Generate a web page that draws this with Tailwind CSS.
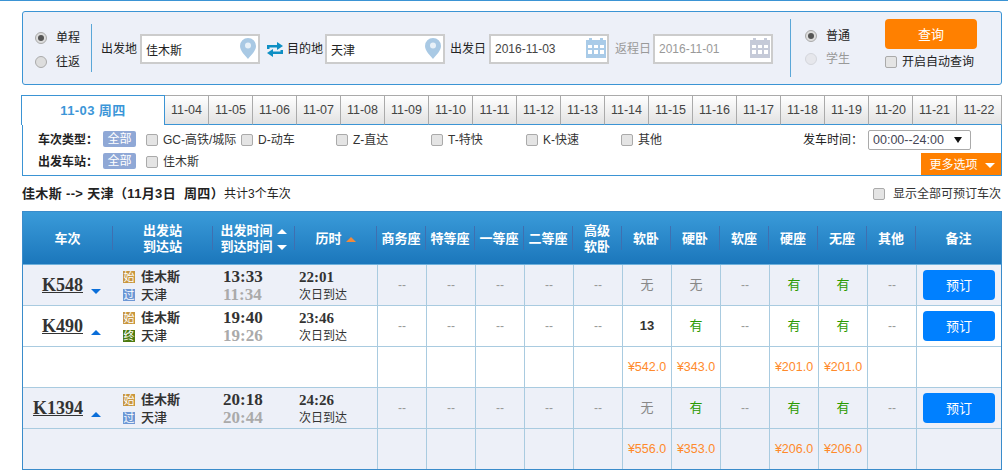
<!DOCTYPE html>
<html lang="zh-CN">
<head>
<meta charset="UTF-8"/>
<title>车票查询</title>
<script src="https://cdn.jsdelivr.net/npm/@tailwindcss/browser@4"></script>
</head>
<body class="bg-white border-t border-[#3b94d4] text-[12px] text-[#333] font-['Liberation_Sans','Noto_Sans_CJK_SC',sans-serif] overflow-hidden">
<div class="ml-[22px] w-[980px]">

  <!-- search box -->
  <div class="mt-[10px] h-[74px] flex items-center pl-[12px] pt-[2px] bg-[#edf0f8] border border-[#3b94d4] rounded-[3px]">
    <div class="w-[56px] pt-[2px]">
      <div class="h-[24px] flex items-center"><span class="w-[12px] h-[12px] rounded-full border border-[#aaa] bg-[#ddd] flex items-center justify-center"><span class="w-[6px] h-[6px] rounded-full bg-[#555]"></span></span><span class="ml-[9px] text-[#222]">单程</span></div>
      <div class="h-[24px] flex items-center"><span class="w-[12px] h-[12px] rounded-full border border-[#aaa] bg-[#ddd]"></span><span class="ml-[9px] text-[#222]">往返</span></div>
    </div>
    <div class="w-px h-[48px] mb-[2px] bg-[#5aa7d8]"></div>
    <span class="ml-[9px] w-[36px] text-[#222] whitespace-nowrap">出发地</span>
    <div class="relative ml-[3px] w-[120px] h-[30px]">
      <input value="佳木斯" class="w-full h-full pl-[4px] bg-white border-2 border-[#ccc] text-[#222] outline-none"/>
      <svg class="absolute right-[4px] top-[4px]" width="16" height="21" viewBox="0 0 16 21"><path d="M8 0a8 8 0 0 1 8 8c0 5-5 9-8 13C5 17 0 13 0 8a8 8 0 0 1 8-8z" fill="#a9c9e4"/><circle cx="8" cy="7.5" r="3" fill="#e8f1f8"/></svg>
    </div>
    <svg class="ml-[7px]" width="16" height="15" viewBox="0 0 16 15"><path d="M0 7V3h10V0l6 4-6 4V5.500H2.500V7z" fill="#0e8fc4"/><path d="M16 8v4H6v3l-6-4 6-4v2.500h7.500V8z" fill="#0e8fc4"/></svg>
    <span class="ml-[4px] w-[36px] text-[#222] whitespace-nowrap">目的地</span>
    <div class="relative ml-[2px] w-[120px] h-[30px]">
      <input value="天津" class="w-full h-full pl-[4px] bg-white border-2 border-[#ccc] text-[#222] outline-none"/>
      <svg class="absolute right-[4px] top-[4px]" width="16" height="21" viewBox="0 0 16 21"><path d="M8 0a8 8 0 0 1 8 8c0 5-5 9-8 13C5 17 0 13 0 8a8 8 0 0 1 8-8z" fill="#a9c9e4"/><circle cx="8" cy="7.500" r="3" fill="#e8f1f8"/></svg>
    </div>
    <span class="ml-[5px] w-[36px] text-[#222] whitespace-nowrap">出发日</span>
    <div class="relative ml-[3px] w-[120px] h-[30px]">
      <input value="2016-11-03" class="w-full h-full pl-[4px] bg-white border-2 border-[#ccc] text-[#444] outline-none"/>
      <svg class="absolute right-[3px] top-[4px]" width="20" height="20" viewBox="0 0 20 20"><path d="M0 2h3V0h3v2h8V0h3v2h3v18H0z" fill="#a9cbe8"/><path d="M2 7h4v3H2zM8 7h4v3H8zM14 7h4v3h-4zM2 12h4v4H2zM8 12h4v4H8zM14 12h4v4h-4z" fill="#fff"/></svg>
    </div>
    <span class="ml-[6px] w-[35px] text-[#999] whitespace-nowrap">返程日</span>
    <div class="relative ml-[3px] w-[120px] h-[30px]">
      <input value="2016-11-01" class="w-full h-full pl-[4px] bg-white border-2 border-[#ccc] text-[#999] outline-none"/>
      <svg class="absolute right-[3px] top-[4px]" width="20" height="20" viewBox="0 0 20 20"><path d="M0 2h3V0h3v2h8V0h3v2h3v18H0z" fill="#c5cad8"/><path d="M2 7h4v3H2zM8 7h4v3H8zM14 7h4v3h-4zM2 12h4v4H2zM8 12h4v4H8zM14 12h4v4h-4z" fill="#fff"/></svg>
    </div>
    <div class="ml-[17px] w-px h-[58px] mb-[2px] bg-[#5aa7d8]"></div>
    <div class="ml-[14px] w-[80px] self-start mt-[10px]">
      <div class="h-[23px] flex items-center"><span class="w-[12px] h-[12px] rounded-full border border-[#aaa] bg-[#ddd] flex items-center justify-center"><span class="w-[6px] h-[6px] rounded-full bg-[#555]"></span></span><span class="ml-[9px] text-[#222]">普通</span></div>
      <div class="h-[23px] flex items-center"><span class="w-[12px] h-[12px] rounded-full border border-[#d4d6dc] bg-[#e6e7ec]"></span><span class="ml-[9px] text-[#999]">学生</span></div>
    </div>
    <div class="self-start mt-[5px] w-[92px]">
      <button class="w-[92px] h-[30px] pt-[1px] rounded-[4px] bg-[#ff8000] text-white text-[13px]">查询</button>
      <div class="mt-[4px] flex items-center whitespace-nowrap"><span class="w-[12px] h-[12px] rounded-[2px] border border-[#aaa] bg-[#e4e4e4]"></span><span class="ml-[5px] text-[#222]">开启自动查询</span></div>
    </div>
  </div>

  <!-- date tabs -->
  <div class="mt-[10px] -ml-px flex h-[30px] text-[12.500px] text-[#444]">
    <div class="w-[144px] border-t border-x border-[#3b94d4] bg-white flex items-center justify-center font-bold text-[13px] tracking-[0.4px] text-[#3b96d8]">11-03 周四</div>
    <div class="w-[44px] flex items-center justify-center border-t border-r border-t-[#aaa] border-r-[#aaa] border-b border-b-[#3b94d4] bg-gradient-to-b from-white to-[#e2e2e2]">11-04</div>
    <div class="w-[44px] flex items-center justify-center border-t border-r border-t-[#aaa] border-r-[#aaa] border-b border-b-[#3b94d4] bg-gradient-to-b from-white to-[#e2e2e2]">11-05</div>
    <div class="w-[44px] flex items-center justify-center border-t border-r border-t-[#aaa] border-r-[#aaa] border-b border-b-[#3b94d4] bg-gradient-to-b from-white to-[#e2e2e2]">11-06</div>
    <div class="w-[44px] flex items-center justify-center border-t border-r border-t-[#aaa] border-r-[#aaa] border-b border-b-[#3b94d4] bg-gradient-to-b from-white to-[#e2e2e2]">11-07</div>
    <div class="w-[44px] flex items-center justify-center border-t border-r border-t-[#aaa] border-r-[#aaa] border-b border-b-[#3b94d4] bg-gradient-to-b from-white to-[#e2e2e2]">11-08</div>
    <div class="w-[44px] flex items-center justify-center border-t border-r border-t-[#aaa] border-r-[#aaa] border-b border-b-[#3b94d4] bg-gradient-to-b from-white to-[#e2e2e2]">11-09</div>
    <div class="w-[44px] flex items-center justify-center border-t border-r border-t-[#aaa] border-r-[#aaa] border-b border-b-[#3b94d4] bg-gradient-to-b from-white to-[#e2e2e2]">11-10</div>
    <div class="w-[44px] flex items-center justify-center border-t border-r border-t-[#aaa] border-r-[#aaa] border-b border-b-[#3b94d4] bg-gradient-to-b from-white to-[#e2e2e2]">11-11</div>
    <div class="w-[44px] flex items-center justify-center border-t border-r border-t-[#aaa] border-r-[#aaa] border-b border-b-[#3b94d4] bg-gradient-to-b from-white to-[#e2e2e2]">11-12</div>
    <div class="w-[44px] flex items-center justify-center border-t border-r border-t-[#aaa] border-r-[#aaa] border-b border-b-[#3b94d4] bg-gradient-to-b from-white to-[#e2e2e2]">11-13</div>
    <div class="w-[44px] flex items-center justify-center border-t border-r border-t-[#aaa] border-r-[#aaa] border-b border-b-[#3b94d4] bg-gradient-to-b from-white to-[#e2e2e2]">11-14</div>
    <div class="w-[44px] flex items-center justify-center border-t border-r border-t-[#aaa] border-r-[#aaa] border-b border-b-[#3b94d4] bg-gradient-to-b from-white to-[#e2e2e2]">11-15</div>
    <div class="w-[44px] flex items-center justify-center border-t border-r border-t-[#aaa] border-r-[#aaa] border-b border-b-[#3b94d4] bg-gradient-to-b from-white to-[#e2e2e2]">11-16</div>
    <div class="w-[44px] flex items-center justify-center border-t border-r border-t-[#aaa] border-r-[#aaa] border-b border-b-[#3b94d4] bg-gradient-to-b from-white to-[#e2e2e2]">11-17</div>
    <div class="w-[44px] flex items-center justify-center border-t border-r border-t-[#aaa] border-r-[#aaa] border-b border-b-[#3b94d4] bg-gradient-to-b from-white to-[#e2e2e2]">11-18</div>
    <div class="w-[44px] flex items-center justify-center border-t border-r border-t-[#aaa] border-r-[#aaa] border-b border-b-[#3b94d4] bg-gradient-to-b from-white to-[#e2e2e2]">11-19</div>
    <div class="w-[44px] flex items-center justify-center border-t border-r border-t-[#aaa] border-r-[#aaa] border-b border-b-[#3b94d4] bg-gradient-to-b from-white to-[#e2e2e2]">11-20</div>
    <div class="w-[44px] flex items-center justify-center border-t border-r border-t-[#aaa] border-r-[#aaa] border-b border-b-[#3b94d4] bg-gradient-to-b from-white to-[#e2e2e2]">11-21</div>
    <div class="w-[45px] flex items-center justify-center border-t border-r border-t-[#aaa] border-r-[#aaa] border-b border-b-[#3b94d4] bg-gradient-to-b from-white to-[#e2e2e2]">11-22</div>
  </div>

  <!-- filters -->
  <div class="relative h-[51px] pt-[4px] pl-[15px] border-x border-b border-[#3b94d4]">
    <div class="h-[22px] flex items-center whitespace-nowrap">
      <span class="w-[65px] font-bold text-[#222]">车次类型：</span>
      <span class="w-[33px] h-[16px] -mt-[2px] rounded-[2px] bg-[#8fa8d6] text-white text-center leading-[16px]">全部</span>
      <div class="ml-[10px] w-[95px] flex items-center"><span class="w-[12px] h-[12px] rounded-[2px] border border-[#aaa] bg-[#e4e4e4]"></span><span class="ml-[5px]">GC-高铁/城际</span></div>
      <div class="w-[95px] flex items-center"><span class="w-[12px] h-[12px] rounded-[2px] border border-[#aaa] bg-[#e4e4e4]"></span><span class="ml-[5px]">D-动车</span></div>
      <div class="w-[95px] flex items-center"><span class="w-[12px] h-[12px] rounded-[2px] border border-[#aaa] bg-[#e4e4e4]"></span><span class="ml-[5px]">Z-直达</span></div>
      <div class="w-[95px] flex items-center"><span class="w-[12px] h-[12px] rounded-[2px] border border-[#aaa] bg-[#e4e4e4]"></span><span class="ml-[5px]">T-特快</span></div>
      <div class="w-[95px] flex items-center"><span class="w-[12px] h-[12px] rounded-[2px] border border-[#aaa] bg-[#e4e4e4]"></span><span class="ml-[5px]">K-快速</span></div>
      <div class="w-[95px] flex items-center"><span class="w-[12px] h-[12px] rounded-[2px] border border-[#aaa] bg-[#e4e4e4]"></span><span class="ml-[5px]">其他</span></div>
      <span class="ml-[87px] w-[65px] text-[#222]">发车时间：</span>
      <div class="w-[103px] h-[20px] flex items-center justify-between pl-[4px] pr-[8px] bg-white border border-[#aaa] rounded-[2px] text-[12.500px] text-[#445]">00:00--24:00<span class="border-x-[4px] border-x-transparent border-t-[6px] border-t-[#111]"></span></div>
    </div>
    <div class="h-[22px] flex items-center whitespace-nowrap">
      <span class="w-[65px] font-bold text-[#222]">出发车站：</span>
      <span class="w-[33px] h-[16px] -mt-[2px] rounded-[2px] bg-[#8fa8d6] text-white text-center leading-[16px]">全部</span>
      <div class="ml-[10px] flex items-center"><span class="w-[12px] h-[12px] rounded-[2px] border border-[#aaa] bg-[#e4e4e4]"></span><span class="ml-[5px]">佳木斯</span></div>
    </div>
    <div class="absolute right-0 bottom-0 w-[80px] h-[22px] pl-[2px] pt-[2px] flex items-center justify-center gap-[7px] bg-[#ff8000] text-white">更多选项<span class="border-x-[5px] border-x-transparent border-t-[5px] border-t-white"></span></div>
  </div>

  <!-- result title -->
  <div class="h-[35px] pt-[1px] flex items-center justify-between pr-px whitespace-nowrap">
    <div class="text-[#222]"><span class="font-bold text-[13px] tracking-[0.35px]">佳木斯 --&gt; 天津（11月3日&nbsp; 周四）</span>共计3个车次</div>
    <div class="flex items-center"><span class="w-[12px] h-[12px] rounded-[2px] border border-[#aaa] bg-[#e4e4e4]"></span><span class="ml-[8px]">显示全部可预订车次</span></div>
  </div>

  <!-- results table -->
  <div class="border border-[#3a8ccb]">
    <table class="table-fixed w-[978px] border-separate border-spacing-0">
      <colgroup>
        <col class="w-[90px]"/><col class="w-[100px]"/><col class="w-[82px]"/><col class="w-[82px]"/>
        <col class="w-[49px]"/><col class="w-[49px]"/><col class="w-[49px]"/><col class="w-[49px]"/><col class="w-[49px]"/><col class="w-[49px]"/>
        <col class="w-[49px]"/><col class="w-[49px]"/><col class="w-[49px]"/><col class="w-[49px]"/><col class="w-[49px]"/><col class="w-[85px]"/>
      </colgroup>
      <thead>
        <tr class="h-[53px] bg-gradient-to-b from-[#3a9bd9] to-[#1a76bb] text-white text-[13px] leading-[16px] font-bold">
          <th class="p-0 border-b border-[#6fb1dc]"><div class="h-[24px] pt-[2px] flex items-center justify-center border-r border-[#3f6fb0]">车次</div></th>
          <th class="p-0 border-b border-[#6fb1dc]"><div class="h-[24px] pt-[2px] flex flex-col items-center justify-center border-r border-[#3f6fb0]"><span>出发站</span><span>到达站</span></div></th>
          <th class="p-0 border-b border-[#6fb1dc]"><div class="h-[24px] pt-[2px] flex flex-col items-center justify-center border-r border-[#3f6fb0]">
            <span class="flex items-center gap-[4px]">出发时间<span class="border-x-[5px] border-x-transparent border-b-[5px] border-b-white"></span></span>
            <span class="flex items-center gap-[4px]">到达时间<span class="border-x-[5px] border-x-transparent border-t-[5px] border-t-white"></span></span>
          </div></th>
          <th class="p-0 border-b border-[#6fb1dc]"><div class="h-[24px] pt-[2px] flex items-center justify-center gap-[4px] border-r border-[#3f6fb0]">历时<span class="border-x-[5px] border-x-transparent border-b-[5px] border-b-[#f08a3c]"></span></div></th>
          <th class="p-0 border-b border-[#6fb1dc]"><div class="h-[24px] pt-[2px] flex items-center justify-center border-r border-[#3f6fb0] whitespace-nowrap">商务座</div></th>
          <th class="p-0 border-b border-[#6fb1dc]"><div class="h-[24px] pt-[2px] flex items-center justify-center border-r border-[#3f6fb0] whitespace-nowrap">特等座</div></th>
          <th class="p-0 border-b border-[#6fb1dc]"><div class="h-[24px] pt-[2px] flex items-center justify-center border-r border-[#3f6fb0] whitespace-nowrap">一等座</div></th>
          <th class="p-0 border-b border-[#6fb1dc]"><div class="h-[24px] pt-[2px] flex items-center justify-center border-r border-[#3f6fb0] whitespace-nowrap">二等座</div></th>
          <th class="p-0 border-b border-[#6fb1dc]"><div class="h-[24px] pt-[2px] flex flex-col items-center justify-center border-r border-[#3f6fb0]"><span>高级</span><span>软卧</span></div></th>
          <th class="p-0 border-b border-[#6fb1dc]"><div class="h-[24px] pt-[2px] flex items-center justify-center border-r border-[#3f6fb0]">软卧</div></th>
          <th class="p-0 border-b border-[#6fb1dc]"><div class="h-[24px] pt-[2px] flex items-center justify-center border-r border-[#3f6fb0]">硬卧</div></th>
          <th class="p-0 border-b border-[#6fb1dc]"><div class="h-[24px] pt-[2px] flex items-center justify-center border-r border-[#3f6fb0]">软座</div></th>
          <th class="p-0 border-b border-[#6fb1dc]"><div class="h-[24px] pt-[2px] flex items-center justify-center border-r border-[#3f6fb0]">硬座</div></th>
          <th class="p-0 border-b border-[#6fb1dc]"><div class="h-[24px] pt-[2px] flex items-center justify-center border-r border-[#3f6fb0]">无座</div></th>
          <th class="p-0 border-b border-[#6fb1dc]"><div class="h-[24px] pt-[2px] flex items-center justify-center border-r border-[#3f6fb0]">其他</div></th>
          <th class="p-0 pt-[1px] border-b border-[#6fb1dc]">备注</th>
        </tr>
      </thead>
      <tbody class="[&>tr>td]:p-0 [&>tr>td]:border-b [&>tr>td]:border-[#a9cbe0] [&>tr:last-child>td]:border-b-0">
        <tr class="h-[41px] bg-[#edf0f8]">
          <td><div class="flex items-end justify-end pr-[12px]"><a class="font-['Liberation_Serif',serif] font-bold text-[18px] leading-[20px] underline text-[#333]">K548</a><span class="ml-[8px] mb-[1px] border-x-[5px] border-x-transparent border-t-[5px] border-t-[#0a6ed9]"></span></div></td>
          <td><div class="pl-[10px] pt-[2px] text-[13px] leading-[18px]">
            <div class="flex items-center font-bold"><span class="w-[12px] h-[12px] bg-[#c8963e] text-white text-[11px] leading-[12px] text-center font-normal">始</span><span class="ml-[6px]">佳木斯</span></div>
            <div class="flex items-center font-medium"><span class="w-[12px] h-[12px] bg-[#6d97d5] text-white text-[11px] leading-[12px] text-center font-normal">过</span><span class="ml-[6px]">天津</span></div>
          </div></td>
          <td><div class="pl-[10px] pt-[2px] font-['Liberation_Serif',serif] font-bold text-[17px] leading-[18px]"><div>13:33</div><div class="text-[#aaa]">11:34</div></div></td>
          <td><div class="pl-[4px] pt-[2px] leading-[18px]"><div class="font-['Liberation_Serif',serif] font-bold text-[15px]">22:01</div><div>次日到达</div></div></td>
          <td class="border-l text-center text-[#999]">--</td><td class="border-l text-center text-[#999]">--</td><td class="border-l text-center text-[#999]">--</td><td class="border-l text-center text-[#999]">--</td><td class="border-l text-center text-[#999]">--</td>
          <td class="border-l text-center text-[#888] text-[13px]">无</td><td class="border-l text-center text-[#888] text-[13px]">无</td>
          <td class="border-l text-center text-[#999]">--</td>
          <td class="border-l text-center text-[#2a9a00] text-[13px]">有</td><td class="border-l text-center text-[#2a9a00] text-[13px]">有</td>
          <td class="border-l text-center text-[#999]">--</td>
          <td class="border-l text-center"><button class="w-[72px] h-[30px] pt-[1px] rounded-[4px] bg-[#0080ff] text-white text-[13px]">预订</button></td>
        </tr>
        <tr class="h-[41px] bg-white">
          <td><div class="flex items-end justify-end pr-[12px]"><a class="font-['Liberation_Serif',serif] font-bold text-[18px] leading-[20px] underline text-[#333]">K490</a><span class="ml-[8px] mb-[1px] border-x-[5px] border-x-transparent border-b-[5px] border-b-[#0a6ed9]"></span></div></td>
          <td><div class="pl-[10px] pt-[2px] text-[13px] leading-[18px]">
            <div class="flex items-center font-bold"><span class="w-[12px] h-[12px] bg-[#c8963e] text-white text-[11px] leading-[12px] text-center font-normal">始</span><span class="ml-[6px]">佳木斯</span></div>
            <div class="flex items-center font-medium"><span class="w-[12px] h-[12px] bg-[#4c7a10] text-white text-[11px] leading-[12px] text-center font-normal">终</span><span class="ml-[6px]">天津</span></div>
          </div></td>
          <td><div class="pl-[10px] pt-[2px] font-['Liberation_Serif',serif] font-bold text-[17px] leading-[18px]"><div>19:40</div><div class="text-[#aaa]">19:26</div></div></td>
          <td><div class="pl-[4px] pt-[2px] leading-[18px]"><div class="font-['Liberation_Serif',serif] font-bold text-[15px]">23:46</div><div>次日到达</div></div></td>
          <td class="border-l text-center text-[#999]">--</td><td class="border-l text-center text-[#999]">--</td><td class="border-l text-center text-[#999]">--</td><td class="border-l text-center text-[#999]">--</td><td class="border-l text-center text-[#999]">--</td>
          <td class="border-l text-center font-bold text-[13px] text-[#333]">13</td><td class="border-l text-center text-[#2a9a00] text-[13px]">有</td>
          <td class="border-l text-center text-[#999]">--</td>
          <td class="border-l text-center text-[#2a9a00] text-[13px]">有</td><td class="border-l text-center text-[#2a9a00] text-[13px]">有</td>
          <td class="border-l text-center text-[#999]">--</td>
          <td class="border-l text-center"><button class="w-[72px] h-[30px] pt-[1px] rounded-[4px] bg-[#0080ff] text-white text-[13px]">预订</button></td>
        </tr>
        <tr class="h-[41px] bg-white">
          <td colspan="4"></td>
          <td class="border-l"></td><td class="border-l"></td><td class="border-l"></td><td class="border-l"></td><td class="border-l"></td>
          <td class="border-l text-center text-[#ff8a2b] text-[12.500px]">¥542.0</td><td class="border-l text-center text-[#ff8a2b] text-[12.500px]">¥343.0</td>
          <td class="border-l"></td>
          <td class="border-l text-center text-[#ff8a2b] text-[12.500px]">¥201.0</td><td class="border-l text-center text-[#ff8a2b] text-[12.500px]">¥201.0</td>
          <td class="border-l"></td><td class="border-l"></td>
        </tr>
        <tr class="h-[41px] bg-[#edf0f8]">
          <td><div class="flex items-end justify-end pr-[12px]"><a class="font-['Liberation_Serif',serif] font-bold text-[18px] leading-[20px] underline text-[#333]">K1394</a><span class="ml-[8px] mb-[1px] border-x-[5px] border-x-transparent border-b-[5px] border-b-[#0a6ed9]"></span></div></td>
          <td><div class="pl-[10px] pt-[2px] text-[13px] leading-[18px]">
            <div class="flex items-center font-bold"><span class="w-[12px] h-[12px] bg-[#c8963e] text-white text-[11px] leading-[12px] text-center font-normal">始</span><span class="ml-[6px]">佳木斯</span></div>
            <div class="flex items-center font-medium"><span class="w-[12px] h-[12px] bg-[#6d97d5] text-white text-[11px] leading-[12px] text-center font-normal">过</span><span class="ml-[6px]">天津</span></div>
          </div></td>
          <td><div class="pl-[10px] pt-[2px] font-['Liberation_Serif',serif] font-bold text-[17px] leading-[18px]"><div>20:18</div><div class="text-[#aaa]">20:44</div></div></td>
          <td><div class="pl-[4px] pt-[2px] leading-[18px]"><div class="font-['Liberation_Serif',serif] font-bold text-[15px]">24:26</div><div>次日到达</div></div></td>
          <td class="border-l text-center text-[#999]">--</td><td class="border-l text-center text-[#999]">--</td><td class="border-l text-center text-[#999]">--</td><td class="border-l text-center text-[#999]">--</td><td class="border-l text-center text-[#999]">--</td>
          <td class="border-l text-center text-[#888] text-[13px]">无</td><td class="border-l text-center text-[#2a9a00] text-[13px]">有</td>
          <td class="border-l text-center text-[#999]">--</td>
          <td class="border-l text-center text-[#2a9a00] text-[13px]">有</td><td class="border-l text-center text-[#2a9a00] text-[13px]">有</td>
          <td class="border-l text-center text-[#999]">--</td>
          <td class="border-l text-center"><button class="w-[72px] h-[30px] pt-[1px] rounded-[4px] bg-[#0080ff] text-white text-[13px]">预订</button></td>
        </tr>
        <tr class="h-[40px] bg-[#edf0f8]">
          <td colspan="4"></td>
          <td class="border-l"></td><td class="border-l"></td><td class="border-l"></td><td class="border-l"></td><td class="border-l"></td>
          <td class="border-l text-center text-[#ff8a2b] text-[12.500px]">¥556.0</td><td class="border-l text-center text-[#ff8a2b] text-[12.500px]">¥353.0</td>
          <td class="border-l"></td>
          <td class="border-l text-center text-[#ff8a2b] text-[12.500px]">¥206.0</td><td class="border-l text-center text-[#ff8a2b] text-[12.500px]">¥206.0</td>
          <td class="border-l"></td><td class="border-l"></td>
        </tr>
      </tbody>
    </table>
  </div>
</div>
</body>
</html>
